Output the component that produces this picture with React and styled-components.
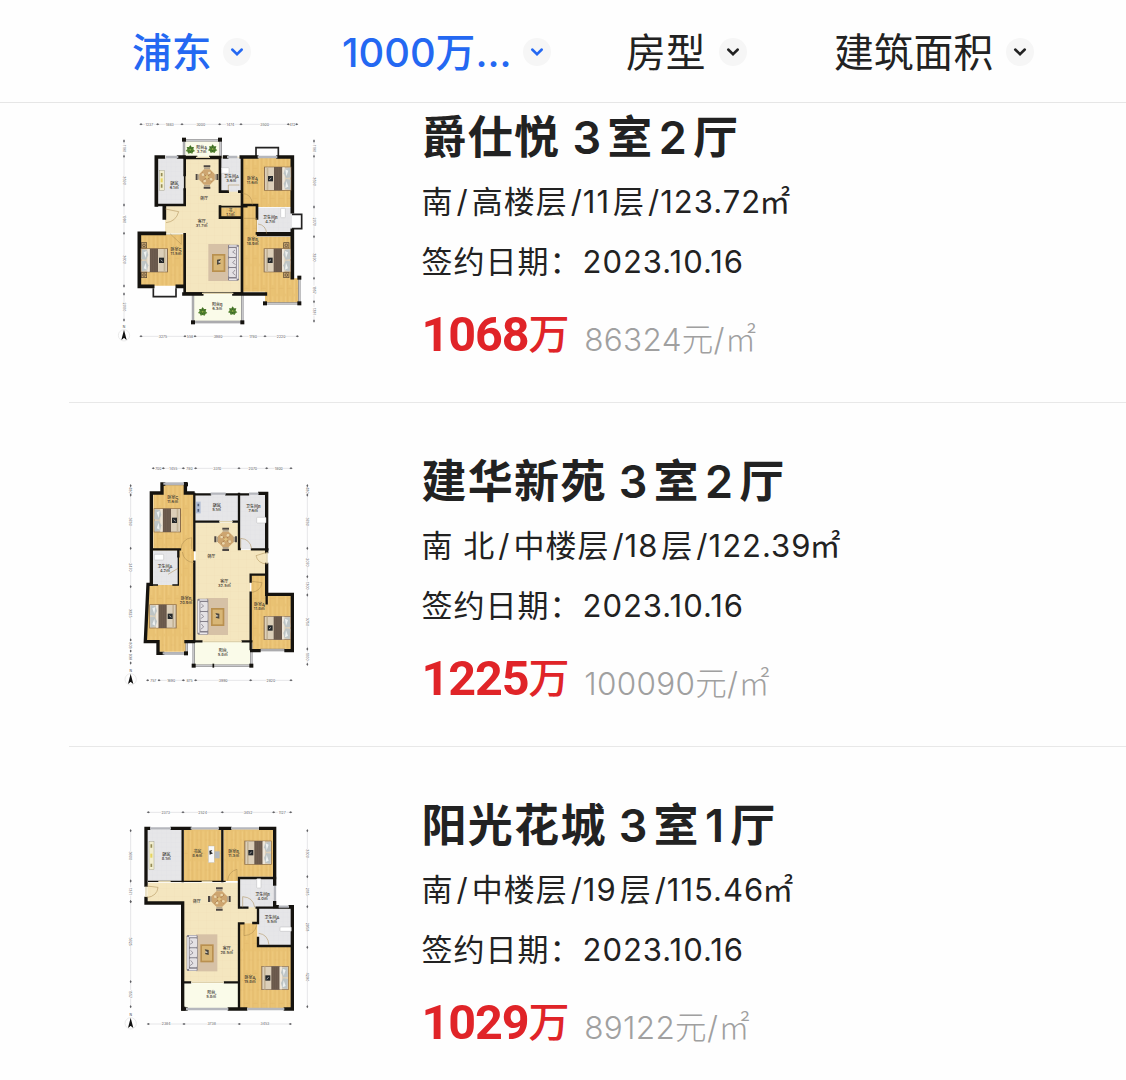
import React from "react";
import styled, { createGlobalStyle } from "styled-components";

const GlobalStyle = createGlobalStyle`
  * {
    box-sizing: border-box;
  }

  body {
    margin: 0;
    background: #ffffff;
    color: #222222;
    font-family: Inter, 'Noto Sans CJK SC', sans-serif;
  }
`;

const Page = styled.div`
  width: 1126px;
  height: 1080px;
  overflow: hidden;
  background: #fefefe;
`;

const FilterBar = styled.nav`
  position: relative;
  z-index: 1;
  display: grid;
  grid-template-columns: 210px 284px 208px 1fr;
  align-items: center;
  height: 103px;
  padding-left: 132px;
  background: #fefefe;
  border-bottom: 1px solid #e6e6e6;
`;

const Filter = styled.div`
  display: flex;
  align-items: center;
  gap: 11px;
  color: ${(props) => (props.$active ? "#2468f2" : "#222222")};
  font-size: 39.8px;
  font-weight: ${(props) => (props.$active ? 500 : 400)};
  line-height: 60px;
  white-space: nowrap;
`;

const FilterLabel = styled.span`
  width: ${(props) => props.$width}px;
  padding-top: 4px;
`;

const Arrow = styled.span`
  display: flex;
  align-items: center;
  justify-content: center;
  width: 28px;
  height: 28px;
  margin-top: 2px;
  border-radius: 50%;
  background: #f6f6f6;
`;

const List = styled.main`
  margin-top: -44px;
`;

const House = styled.article`
  display: flex;
  height: 344px;
  margin-left: 69px;
  padding: 48px 0 0 41px;
  border-bottom: 1px solid #e8e8e8;
`;

const Plan = styled.svg`
  display: block;
  flex-shrink: 0;
  width: 220px;
  height: 240px;
  margin-top: 8px;
`;

const Details = styled.div`
  margin-left: 91.5px;
  white-space: nowrap;
`;

const Title = styled.h2`
  margin: 1px 0 4px;
  font-size: 45px;
  font-weight: 700;
  line-height: 60px;
  letter-spacing: 1.3px;
  word-spacing: -5px;
`;

const Line = styled.p`
  margin: 0;
  font-size: 31px;
  line-height: 60px;
  letter-spacing: 1px;
`;

const PriceRow = styled.div`
  display: flex;
  align-items: baseline;
  gap: 16px;
  margin-top: 11px;
  line-height: 60px;
`;

const Price = styled.strong`
  display: flex;
  align-items: baseline;
  color: #e02428;
  font-size: 48.5px;
  font-family: Roboto, sans-serif;
  font-weight: 700;
  letter-spacing: -1.1px;
`;

const PriceUnit = styled.span`
  position: relative;
  top: -2px;
  font-family: 'Noto Sans CJK SC', sans-serif;
  font-size: 41px;
  font-weight: 500;
`;

const UnitPrice = styled.span`
  color: #a0a0a0;
  font-size: 31.5px;
  font-weight: 300;
  letter-spacing: 0.3px;
`;

const Digits = styled.span`
  margin: 0 ${(props) => props.$gap || 0}px;
  font-weight: ${(props) => props.$weight || 400};
`;

const SquareMetre = styled.span`
  margin-left: ${(props) => props.$pull || 0}px;
`;

// Digit runs sit a little apart from the Chinese characters around them
const Mixed = ({ text, gap, weight }) =>
  text.split(/([0-9./]+)/).map((part, i) => {
    if (i % 2) {
      return (
        <Digits key={i} $gap={gap} $weight={weight}>
          {part}
        </Digits>
      );
    }
    return part === "㎡" ? (
      <SquareMetre key={i} $pull={-5}>
        {part}
      </SquareMetre>
    ) : (
      part
    );
  });

const WALL = "#15130f";

const Defs = () => (
  <defs>
    <pattern id="wood" width="26" height="90" patternUnits="userSpaceOnUse">
      <rect width="26" height="90" fill="#e9c273" />
      <path d="M0 0V90M13 0V90M0 30H13M13 70H26" stroke="#ddb262" strokeWidth="1" />
      <path d="M7 4V86M20 4V60" stroke="#f0cd84" strokeWidth="2" />
    </pattern>
    <pattern id="tile" width="24" height="24" patternUnits="userSpaceOnUse">
      <rect width="24" height="24" fill="#f4e6bf" />
      <path d="M0 0H24M0 0V24" stroke="#eddcb0" strokeWidth="1" />
    </pattern>
    <pattern id="grey" width="14" height="14" patternUnits="userSpaceOnUse">
      <rect width="14" height="14" fill="#e6e6e8" />
      <path d="M0 0H14M0 0V14" stroke="#dedee1" strokeWidth="1" />
    </pattern>
  </defs>
);

const Room = ({ d, kind = "wood" }) => (
  <path d={d} fill={kind === "balcony" ? "#fafbe9" : `url(#${kind})`} />
);

const Walls = ({ d, width = 11 }) => (
  <path d={d} fill="none" stroke={WALL} strokeWidth={width} strokeLinecap="square" />
);

const Rails = ({ d }) => (
  <>
    <path d={d} fill="none" stroke="#808083" strokeWidth="7" />
    <path d={d} fill="none" stroke="#d6d6d9" strokeWidth="3" />
  </>
);

const Posts = ({ at }) =>
  at.map(([x, y]) => <rect key={`${x}-${y}`} x={x - 6} y={y - 6} width="12" height="12" fill={WALL} />);

// The head of the bed points right unless it is flipped
const Bed = ({ x, y, flip }) => (
  <g transform={flip ? `translate(${x + 82} ${y}) scale(-1 1)` : `translate(${x} ${y})`}>
    <rect width="82" height="72" fill="#8b6d4c" />
    <rect x="3" y="2" width="77" height="68" fill="#dccfb9" />
    <rect x="8" y="2" width="5" height="68" fill="#c3b397" />
    <rect x="30" y="1" width="25" height="70" fill="#69584b" />
    <path d="M36 2V70M43 2V70M49 2V70" stroke="#7b6a5b" strokeWidth="1" />
    <rect x="55" y="2" width="7" height="68" fill="#eee6d9" />
    <path d="M63 6L78 3L80 32L66 34L59 20Z" fill="#bdc4c5" />
    <path d="M63 66L78 69L80 39L66 37L59 51Z" fill="#bdc4c5" />
    <path d="M64 8L73 12L67 29ZM64 64L73 60L67 43Z" fill="#edf0ef" />
    <rect x="12" y="28" width="15" height="16" fill="#24272a" />
    <path d="M16 39L22 34" stroke="#a5a5a5" strokeWidth="3" />
  </g>
);

const Table = ({ x, y }) => (
  <g transform={`translate(${x} ${y})`}>
    <path d="M-10 -32H10M-10 32H10M-31 -9V9M31 -9V9" stroke="#4d4743" strokeWidth="6" />
    <path d="M-9 -26H9M-9 26H9M-25 -8V8M25 -8V8" stroke="#b4a58c" strokeWidth="6" />
    <path d="M-9 -23H9L23 -9V9L9 23H-9L-23 9V-9Z" fill="#cda570" />
    <path d="M-14 -13L14 13M-14 13L14 -13" stroke="#ab7f4b" strokeWidth="3" />
    <g fill="#ead7ae">
      <circle cx="-12" cy="-7" r="4" />
      <circle cx="7" cy="-12" r="4" />
      <circle cx="12" cy="7" r="4" />
      <circle cx="-7" cy="12" r="4" />
    </g>
    <circle r="5" fill="#dfc17e" />
  </g>
);

const Lounge = ({ x, y, flip }) => (
  <g transform={flip ? `translate(${x + 92} ${y}) scale(-1 1)` : `translate(${x} ${y})`}>
    <rect width="64" height="111" fill="#d6c1a6" />
    <rect x="11" y="30" width="40" height="54" fill="#b9904f" />
    <rect x="16" y="35" width="30" height="44" fill="#d8b676" />
    <path d="M26 47L38 45L34 52L37 59L26 62Z" fill="#4a453c" />
    <path d="M28 54L35 51V56Z" fill="#eeeeee" />
    <rect x="59" y="2" width="33" height="108" rx="4" fill="#85808a" />
    <rect x="61" y="12" width="22" height="27" rx="3" fill="#e4e1e4" />
    <rect x="61" y="42" width="22" height="27" rx="3" fill="#e4e1e4" />
    <rect x="61" y="72" width="22" height="27" rx="3" fill="#e4e1e4" />
    <path d="M88 8V104M62 6H85M62 106H85" stroke="#eae7ec" strokeWidth="5" />
    <path d="M80 18L73 24L82 30M80 48L73 56L82 62M80 78L73 87L82 94" stroke="#79727d" fill="none" strokeWidth="2" />
  </g>
);

const Plant = ({ x, y }) => (
  <g transform={`translate(${x} ${y})`}>
    <path d="M0 -14L4 -8L11 -8L9 -1L14 4L8 7L6 12L0 10L-6 12L-8 6L-14 4L-9 -2L-11 -8L-4 -8Z" fill="#548331" />
    <path d="M-8 -6L8 7M8 -6L-8 7M0 -11V9" stroke="#2e5b20" strokeWidth="2" />
    <circle r="3" fill="#8cab42" />
  </g>
);

const Stove = ({ x, y, h = 60 }) => (
  <g transform={`translate(${x} ${y})`}>
    <rect width="15" height={h} fill="#f1edcf" stroke="#87846d" />
    <path d={`M7 8V18M7 ${h - 18}V${h - 8}`} stroke="#948b54" strokeWidth="5" />
    <path d={`M4 ${h / 2 - 6}H10V${h / 2 + 6}H4Z`} fill="#e6d45d" />
  </g>
);

const Fixture = ({ x, y, w = 24, h = 14 }) => (
  <rect x={x} y={y} width={w} height={h} rx="2" fill="#ffffff" stroke="#b8b8bb" strokeWidth="1.5" />
);

const Nightstands = ({ x, ys }) =>
  ys.map((y) => (
    <g key={y} stroke="#574632" fill="#c4a36f" strokeWidth="2">
      <rect x={x - 8} y={y - 8} width="16" height="16" />
      <circle cx={x} cy={y} r="4" />
    </g>
  ));

const Doors = ({ d }) => <path d={d} fill="none" stroke="#a9884e" strokeWidth="1.5" />;

const PlanLabel = ({ x, y, name, area }) => (
  <text x={x} y={y} textAnchor="middle" fontSize="12" fontWeight="500" fill="#39352e">
    {name}
    {area && (
      <tspan x={x} dy="12">
        {area}㎡
      </tspan>
    )}
  </text>
);

// Dimension chain: stops along the line, one length printed between each pair
const Dimensions = ({ at, stops, values, vertical }) => {
  const start = stops[0];
  const end = stops[stops.length - 1];
  return (
    <g
      transform={vertical ? `translate(${at} 0) rotate(90)` : `translate(0 ${at})`}
      fill="#606064"
      fontSize="10.5"
      textAnchor="middle"
    >
      <path d={`M${start} 0H${end}`} stroke="#cfcfd2" strokeWidth="1.5" />
      {stops.map((stop) => (
        <path key={stop} d={`M${stop - 5} 0L${stop} -3V3ZM${stop + 5} 0L${stop} -3V3Z`} />
      ))}
      {values.map((value, i) => {
        const middle = (stops[i] + stops[i + 1]) / 2;
        const half = Math.min(13, (stops[i + 1] - stops[i]) / 2 - 4);
        return (
          <g key={i}>
            <rect x={middle - half} y="-5" width={half * 2} height="10" fill="#fefefe" />
            <text x={middle} y="4">
              {value}
            </text>
          </g>
        );
      })}
    </g>
  );
};

const Compass = ({ x, y }) => (
  <g transform={`translate(${x} ${y})`}>
    <circle r="17" fill="none" stroke="#e1e1e1" strokeWidth="2" />
    <path d="M0 -17L8 14L0 8L-8 14Z" fill="#111111" />
    <path d="M0 8V14" stroke="#ffffff" strokeWidth="2" />
    <text y="-22" textAnchor="middle" fontSize="10" fill="#333333">
      N
    </text>
  </g>
);

const PlanJueShiYue = () => (
  <Plan viewBox="0 0 660 720">
    <Defs />
    <Dimensions at={28} stops={[93, 143, 216, 329, 393, 535, 560]} values={["1237", "1883", "3000", "1474", "3500", "412"]} />
    <Dimensions at={664} stops={[93, 225, 255, 393, 465, 562]} values={["3275", "558", "3980", "1780", "2220"]} />
    <Dimensions vertical at={42} stops={[78, 124, 270, 355, 513]} values={["1190", "3590", "1980", "3600"]} />
    <Dimensions vertical at={42} stops={[537, 615]} values={["2000"]} />
    <Dimensions vertical at={612} stops={[78, 124, 276, 365, 490, 560, 618]} values={["1190", "3590", "2070", "3290", "1857", "1331"]} />

    <Room kind="tile" d="M222 125H394V535H222V355H165V272H222Z" />
    <Room kind="grey" d="M140 128H220V270H140Z" />
    <Room kind="grey" d="M331 128H394V230H331Z" />
    <Room d="M399 128H546V276H441V365H546V490H568V565H465V530H397V276Z" />
    <Room d="M331 278H394V308H331Z" />
    <Room d="M90 358H225V512H90Z" />
    <Room kind="grey" d="M443 278H546V357H443Z" />
    <Room kind="balcony" d="M222 77H330V124H222Z" />
    <Room kind="balcony" d="M249 538H397V620H249Z" />

    <Rails d="M222 124V76H332V124" />
    <Rails d="M249 535V621H397V535" />
    <Rails d="M568 488V565H465" />
    <path d="M438 124V98H505V124M546 298H575V341H546M130 520V545H198V520" fill="none" stroke="#232222" strokeWidth="5" />
    <Walls width={8} d="M224 130V180M224 224V270H163M141 270H220M224 358V535M396 130V270H441M330 130V230H353M388 230H396M330 275V308H394M396 278V535M441 276V310M441 355H545M222 126H258M301 126H331" />
    <Walls d="M139 126H160M206 126H222M139 126V270M163 273V309M163 355V355H88V514H128M202 514H222M222 537H275M372 537H466M344 126H350M394 126H440M504 126H547V290M547 346V488M446 358H547" />
    <Walls width={5} d="M224 130H331M225 534H397M330 275H410M224 180V224" />
    <path d="M168 126H205M351 126H382M443 126H502" stroke="#b5b7bd" strokeWidth="7" />
    <path d="M258 127H300M276 535H370M170 358H212" stroke="#ded2ad" strokeWidth="4" />
    <Posts at={[[222, 74], [330, 74], [249, 622], [397, 622], [568, 488], [568, 565], [465, 565]]} />
    <Doors d="M166 282L206 290Q198 320 168 323M398 235Q426 238 427 269M180 356L214 388V358M444 327Q468 330 470 356M355 230V210H388M402 310H440V350" />

    <Stove x={148} y={166} />
    <Table x={291} y={186} />
    <Bed x={462} y={155} />
    <Nightstands x={102} ys={[391, 480]} />
    <Bed x={92} y={400} flip />
    <Nightstands x={529} ys={[391, 480]} />
    <Bed x={461} y={400} />
    <Lounge x={295} y={387} />
    <Fixture x={335} y={158} w={22} h={17} />
    <Fixture x={512} y={280} w={14} h={28} />
    <Plant x={241} y={104} />
    <Plant x={308} y={102} />
    <Plant x={278} y={590} />
    <Plant x={368} y={588} />

    <PlanLabel x={275} y={101} name="阳台A" area="3.7" />
    <PlanLabel x={193} y={210} name="厨房" area="6.1" />
    <PlanLabel x={364} y={190} name="卫生间A" area="3.6" />
    <PlanLabel x={427} y={195} name="卧室A" area="11.6" />
    <PlanLabel x={282} y={254} name="餐厅" />
    <PlanLabel x={275} y={323} name="客厅" area="31.7" />
    <PlanLabel x={361} y={291} name="书" area="1.1" />
    <PlanLabel x={481} y={311} name="卫生间B" area="4.7" />
    <PlanLabel x={198} y={407} name="卧室C" area="11.5" />
    <PlanLabel x={428} y={378} name="卧室B" area="18.9" />
    <PlanLabel x={322} y={574} name="阳台B" area="6.3" />
    <Compass x={42} y={661} />
  </Plan>
);

const PlanJianHua = () => (
  <Plan viewBox="0 12 660 720">
    <Dimensions at={40} stops={[130, 160, 220, 257, 387, 470, 543]} values={["700", "1455", "780", "3310", "2070", "1800"]} />
    <Dimensions at={676} stops={[113, 147, 220, 257, 422, 543]} values={["757", "1690", "875", "3990", "2820"]} />
    <Dimensions vertical at={62} stops={[92, 120, 280, 395, 555, 588, 624]} values={["480", "3780", "2470", "3825", "808", "836"]} />
    <Dimensions vertical at={592} stops={[92, 120, 280, 365, 420, 582, 628]} values={["480", "3780", "2070", "1300", "3750", "1000"]} />

    <Room d="M130 114H158V86H228V114H252V555H228V590H145V555H108L118 383H126V280H130Z" />
    <Room kind="grey" d="M258 117H385V200H258Z" />
    <Room kind="grey" d="M389 117H471V283H389Z" />
    <Room kind="tile" d="M257 203H385V285H470V359H420V560H257Z" />
    <Room kind="grey" d="M129 286H205V390H129Z" />
    <Room d="M424 360H468V420H545V584H424Z" />
    <Room kind="balcony" d="M251 561H424V630H251Z" />

    <Rails d="M251 563V632H424V563M158 87H228V110M145 595H230V560M450 585H525" />
    <Walls width={7} d="M253 117V285M253 320V560M257 118H300M349 118H387V282H389M426 283H472M387 117V200H370M325 200H257M130 283H210M205 283V304M422 362V380M422 413V582M422 359H470V445M352 118H414M248 559H274M398 559H424" />
    <Walls width={4} d="M205 304V390M130 390H142M189 390H205" />
    <Walls width={10} d="M124 114H156V87H161M226 86V114H249M124 114V388H114L106 560H144V595H158M228 560H250M470 117V290M470 328V418H547V587H528M425 587H447M449 115H470" />
    <path d="M302 116H347M417 116H446M160 86H222M158 595H224" stroke="#b5b7bd" strokeWidth="7" />
    <path d="M280 560H395M328 200H368M471 292V326" stroke="#ded2ad" strokeWidth="4" />
    <Posts at={[[228, 88], [251, 632], [424, 632], [228, 595]]} />
    <path d="M310 626V638" stroke={WALL} strokeWidth="5" />
    <Doors d="M213 282Q216 252 245 248V282M217 291Q221 320 252 323M392 281V250Q420 252 425 281M470 292L438 302Q443 325 470 327M425 379L456 383Q452 408 426 412M174 358L204 340" />

    <Bed x={131} y={160} flip />
    <Bed x={118} y={448} flip />
    <Bed x={461} y={483} />
    <Table x={347} y={253} />
    <Lounge x={262} y={429} flip />
    <rect x="258" y="140" width="14" height="35" fill="#b3bfd6" />
    <path d="M265 146V154M265 162V170" stroke="#53617c" strokeWidth="5" />
    <Fixture x={440} y={187} w={28} h={17} />
    <Fixture x={133} y={298} w={28} h={17} />

    <PlanLabel x={188} y={132} name="卧室C" area="11.6" />
    <PlanLabel x={320} y={155} name="厨房" area="5.1" />
    <PlanLabel x={430} y={159} name="卫生间B" area="7.6" />
    <PlanLabel x={304} y={309} name="餐厅" />
    <PlanLabel x={343} y={385} name="客厅" area="32.5" />
    <PlanLabel x={165} y={339} name="卫生间A" area="4.2" />
    <PlanLabel x={228} y={435} name="卧室B" area="20.9" />
    <PlanLabel x={448} y={452} name="卧室A" area="11.8" />
    <PlanLabel x={338} y={591} name="阳台" area="5.8" />
    <Compass x={62} y={673} />
  </Plan>
);

const PlanYangGuang = () => (
  <Plan viewBox="0 9 660 720">
    <Dimensions at={37} stops={[115, 219, 337, 491, 542]} values={["2373", "2524", "3452", "1127"]} />
    <Dimensions at={672} stops={[115, 222, 388, 541]} values={["2384", "3738", "3453"]} />
    <Dimensions vertical at={62} stops={[92, 243, 305]} values={["3600", "1371"]} />
    <Dimensions vertical at={62} stops={[305, 545, 620]} values={["5625", "1557"]} />
    <Dimensions vertical at={592} stops={[92, 230, 320, 442, 620]} values={["3300", "2185", "2858", "4280"]} />

    <Room kind="grey" d="M114 88H217V243H114Z" />
    <Room d="M222 88H334V243H222Z" />
    <Room d="M341 88H493V230H385V243H341Z" />
    <Room kind="tile" d="M112 248H386V318H445V370H386V545H222V308H112Z" />
    <Room kind="grey" d="M391 234H493V322H391Z" />
    <Room kind="grey" d="M444 324H545V438H444Z" />
    <Room d="M390 370H442V441H545V624H390Z" />
    <Room kind="balcony" d="M222 550H387V624H222Z" />

    <Walls width={7} d="M218 88V243M337 88V243M387 234V323H412M440 323H545M387 234H495M444 325V369H430M387 370H400M387 370V624M444 438H545M224 547H240M345 547H385M444 414V438" />
    <Walls width={4} d="M116 244H345" />
    <Walls width={10} d="M108 85H116M186 85H240M330 85H360M452 85H494M108 85V255M108 295V309H218V627H228M494 85V252M494 308V320H502M540 320H547V627H526M358 627H407" />
    <path d="M120 85H183M242 85H327M363 85H447M495 258V303M506 320H537M228 627H355M411 627H523" stroke="#b5b7bd" strokeWidth="7" />
    <path d="M145 244H182M275 244H307M245 547H341M108 260V291" stroke="#ded2ad" strokeWidth="4" />
    <Posts at={[[220, 626]]} />
    <Doors d="M110 258L144 262Q142 288 110 293M353 242Q355 215 381 208V240M398 322V290Q430 292 434 322M403 374L402 407Q433 405 440 376M446 400Q474 403 477 435" />

    <Stove x={117} y={125} h={84} />
    <rect x="295" y="138" width="18" height="50" fill="#f9f9f9" stroke="#aaa7a1" />
    <path d="M298 152L307 150L303 156L309 160L299 164Z" fill="#222222" />
    <rect x="314" y="154" width="15" height="21" fill="#b3b8bd" />
    <Bed x={403} y={122} />
    <Bed x={454} y={498} />
    <Table x={328} y={297} />
    <Lounge x={230} y={403} flip />
    <Fixture x={440} y={236} w={13} h={28} />
    <Fixture x={510} y={381} w={34} h={13} />

    <PlanLabel x={169} y={167} name="厨房" area="8.1" />
    <PlanLabel x={262} y={160} name="书房" area="8.6" />
    <PlanLabel x={371} y={160} name="卧室B" area="11.3" />
    <PlanLabel x={260} y={309} name="餐厅" />
    <PlanLabel x={458} y={289} name="卫生间B" area="4.0" />
    <PlanLabel x={486} y={357} name="卫生间A" area="5.5" />
    <PlanLabel x={350} y={451} name="客厅" area="28.5" />
    <PlanLabel x={420} y={537} name="卧室A" area="15.8" />
    <PlanLabel x={304} y={583} name="阳台" area="5.8" />
    <Compass x={62} y={670} />
  </Plan>
);

const filters = [
  { label: "浦东", width: 80, active: true },
  { label: "1000万...", width: 170, active: true },
  { label: "房型", width: 82 },
  { label: "建筑面积", width: 161 },
];

const houses = [
  {
    name: "爵仕悦",
    layout: "3室2厅",
    info: "南/高楼层/11层/123.72㎡",
    date: "2023.10.16",
    price: "1068",
    unit: "86324元/㎡",
    plan: PlanJueShiYue,
  },
  {
    name: "建华新苑",
    layout: "3室2厅",
    info: "南 北/中楼层/18层/122.39㎡",
    date: "2023.10.16",
    price: "1225",
    unit: "100090元/㎡",
    plan: PlanJianHua,
  },
  {
    name: "阳光花城",
    layout: "3室1厅",
    info: "南/中楼层/19层/115.46㎡",
    date: "2023.10.16",
    price: "1029",
    unit: "89122元/㎡",
    plan: PlanYangGuang,
  },
];

const App = () => {
  return (
    <Page>
      <GlobalStyle />
      <FilterBar>
        {filters.map((filter) => (
          <Filter key={filter.label} $active={filter.active}>
            <FilterLabel $width={filter.width}>{filter.label}</FilterLabel>
            <Arrow>
              <svg width="14" height="10" viewBox="0 0 14 10" fill="none">
                <path d="M2.2 2.5L7 7.2L11.8 2.5" stroke="currentColor" strokeWidth="2.5" strokeLinecap="round" />
              </svg>
            </Arrow>
          </Filter>
        ))}
      </FilterBar>
      <List>
        {houses.map(({ name, layout, info, date, price, unit, plan: HousePlan }) => (
          <House key={name}>
            <HousePlan />
            <Details>
              <Title>
                {name} <Mixed text={layout} gap={5} weight={600} />
              </Title>
              <Line>
                <Mixed text={info} gap={3} />
              </Line>
              <Line>
                签约日期：<Mixed text={date} gap={1} />
              </Line>
              <PriceRow>
                <Price>
                  {price}
                  <PriceUnit>万</PriceUnit>
                </Price>
                <UnitPrice>{unit}</UnitPrice>
              </PriceRow>
            </Details>
          </House>
        ))}
      </List>
    </Page>
  );
};

export default App;
